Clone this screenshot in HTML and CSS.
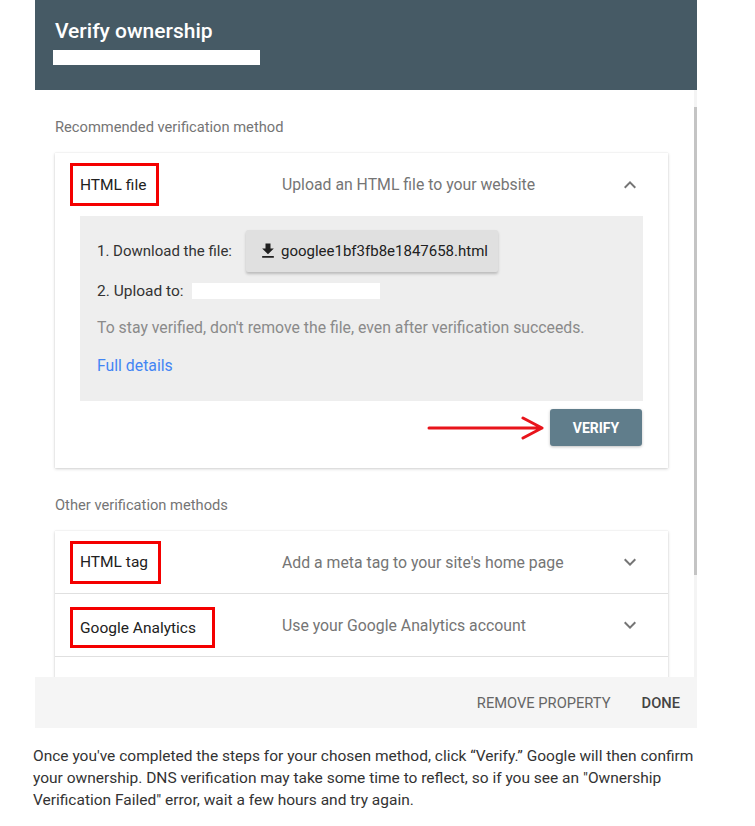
FILE: index.html
```html
<!DOCTYPE html>
<html lang="en">
<head>
<meta charset="utf-8">
<title>Verify ownership</title>
<link rel="stylesheet" href="styles.css">
</head>
<body>
<div class="dialog">
  <div class="header">
    <h1 class="title">Verify ownership</h1>
    <div class="redact redact-head"></div>
  </div>
  <div class="content">
    <div class="scroll-inner">
      <div class="section-label">Recommended verification method</div>
      <div class="card">
        <div class="row">
          <div class="row-title"><span class="mark">HTML file</span></div>
          <div class="row-desc">Upload an HTML file to your website</div>
          <svg class="chev" viewBox="0 0 24 24" width="24" height="24"><path d="M12 8l-6 6 1.41 1.41L12 10.83l4.59 4.58L18 14z"/></svg>
        </div>
        <div class="panel">
          <div class="step step-1">
            <span>1. Download the file:</span>
            <button class="dl-btn">
              <svg viewBox="0 0 24 24" width="20" height="20"><path d="M19 9h-4V3H9v6H5l7 7 7-7zM5 18v2h14v-2H5z"/></svg>
              <span>googlee1bf3fb8e1847658.html</span>
            </button>
          </div>
          <div class="step step-2">
            <span>2. Upload to:</span>
            <div class="redact redact-url"></div>
          </div>
          <div class="step hint">To stay verified, don't remove the file, even after verification succeeds.</div>
          <div class="step link">Full details</div>
        </div>
        <div class="actions">
          <svg class="arrow" viewBox="0 0 120 26" width="120" height="26"><path d="M2 13H115M96 3L115 13L96 23" fill="none" stroke="#e8141b" stroke-width="3" stroke-linecap="round" stroke-linejoin="round"/></svg>
          <button class="verify">VERIFY</button>
        </div>
      </div>
      <div class="section-label other">Other verification methods</div>
      <div class="card list">
        <div class="row bordered">
          <div class="row-title"><span class="mark">HTML tag</span></div>
          <div class="row-desc">Add a meta tag to your site's home page</div>
          <svg class="chev" viewBox="0 0 24 24" width="24" height="24"><path d="M16.59 8.59L12 13.17 7.41 8.59 6 10l6 6 6-6z"/></svg>
        </div>
        <div class="row bordered">
          <div class="row-title"><span class="mark mark-ga">Google Analytics</span></div>
          <div class="row-desc">Use your Google Analytics account</div>
          <svg class="chev" viewBox="0 0 24 24" width="24" height="24"><path d="M16.59 8.59L12 13.17 7.41 8.59 6 10l6 6 6-6z"/></svg>
        </div>
        <div class="row">
          <div class="row-title"></div>
          <div class="row-desc"></div>
        </div>
      </div>
    </div>
    <div class="scrollbar"><div class="thumb"></div></div>
  </div>
  <div class="footer">
    <span class="fbtn">REMOVE PROPERTY</span>
    <span class="fbtn done">DONE</span>
  </div>
</div>
<p class="note">Once you've completed the steps for your chosen method, click “Verify.” Google will then confirm your ownership. DNS verification may take some time to reflect, so if you see an "Ownership Verification Failed" error, wait a few hours and try again.</p>
</body>
</html>
```
FILE: styles.css
```css
* { box-sizing: border-box; }
html, body { margin: 0; padding: 0; background: #fff; }
body { font-family: Roboto, "Noto Sans", "Liberation Sans", sans-serif; color: #212121; }

.dialog { margin-left: 35px; width: 662px; }

.header {
  height: 90px;
  background: #465a65;
  padding: 19px 0 0 20px;
}
.title {
  margin: 0;
  font-size: 21px;
  font-weight: 500;
  line-height: 25px;
  color: #fff;
}
.redact { background: #fff; }
.redact-head { width: 207px; height: 15px; margin-top: 6px; margin-left: -2px; }

.content {
  height: 587px;
  display: flex;
  overflow: hidden;
  background: #fff;
}
.scroll-inner {
  flex: 1;
  padding: 27px 26px 0 20px;
  overflow: hidden;
}
.scrollbar {
  width: 3px;
  background: #f4f4f4;
}
.thumb {
  margin-top: 17px;
  height: 468px;
  background: #c4c4c4;
}

.section-label {
  font-size: 14.7px;
  line-height: 20px;
  color: #757575;
  margin-bottom: 16px;
}
.section-label.other { margin-top: 27px; }

.card {
  background: #fff;
  box-shadow: 0 1px 3px rgba(0,0,0,0.18), 0 0 1px rgba(0,0,0,0.12);
}

.row {
  height: 63px;
  display: flex;
  align-items: center;
  padding: 0 26px 0 15px;
}
.row.bordered { border-bottom: 1px solid #e0e0e0; }
.row-title { width: 212px; flex: none; display: flex; }
.mark {
  display: inline-flex;
  align-items: center;
  height: 43px;
  padding: 0 10px 0 7px;
  border: 3px solid #f40000;
  font-size: 15.5px;
  color: #212121;
}
.mark-ga { padding-right: 16px; height: 41px; margin-top: 5px; }
.row-desc {
  flex: 1;
  font-size: 15.8px;
  color: #757575;
}
.chev { fill: #757575; flex: none; }

.panel {
  margin: 0 25px;
  background: #eeeeee;
  padding: 14px 17px 25px;
  font-size: 15px;
  color: #333;
}
.step { line-height: 20px; }
.step-1 { display: flex; align-items: center; gap: 14px; }
.dl-btn {
  height: 42px;
  border: none;
  border-radius: 2px;
  background: #e0e0e0;
  box-shadow: 0 2px 3px rgba(0,0,0,0.22);
  display: flex;
  align-items: center;
  gap: 3px;
  padding: 0 10px 0 12px;
  font-family: inherit;
  font-size: 15px;
  color: #212121;
}
.dl-btn svg { fill: #212121; }
.step-2 { display: flex; align-items: center; gap: 8px; margin-top: 9px; font-size: 15.5px; }
.redact-url { width: 188px; height: 16px; }
.hint { margin-top: 17px; color: #8a8a8a; font-size: 15.8px; }
.link { margin-top: 18px; color: #4285f4; font-size: 15.8px; }

.actions {
  display: flex;
  justify-content: flex-end;
  align-items: center;
  gap: 3px;
  padding: 8px 26px 22px 0;
}
.verify {
  width: 92px;
  height: 37px;
  border: none;
  border-radius: 3px;
  background: #607d8b;
  color: #fff;
  font-family: inherit;
  font-size: 14px;
  font-weight: 700;
  box-shadow: 0 1px 3px rgba(0,0,0,0.25);
}

.footer {
  height: 51px;
  background: #f5f5f5;
  display: flex;
  justify-content: flex-end;
  align-items: center;
  gap: 31px;
  padding-right: 17px;
  font-size: 14.7px;
  color: #666;
}
.fbtn.done { color: #444; font-weight: 500; }

.note {
  margin: 17px 0 0 33px;
  width: 680px;
  font-size: 15.5px;
  line-height: 22px;
  color: #333;
}
```
